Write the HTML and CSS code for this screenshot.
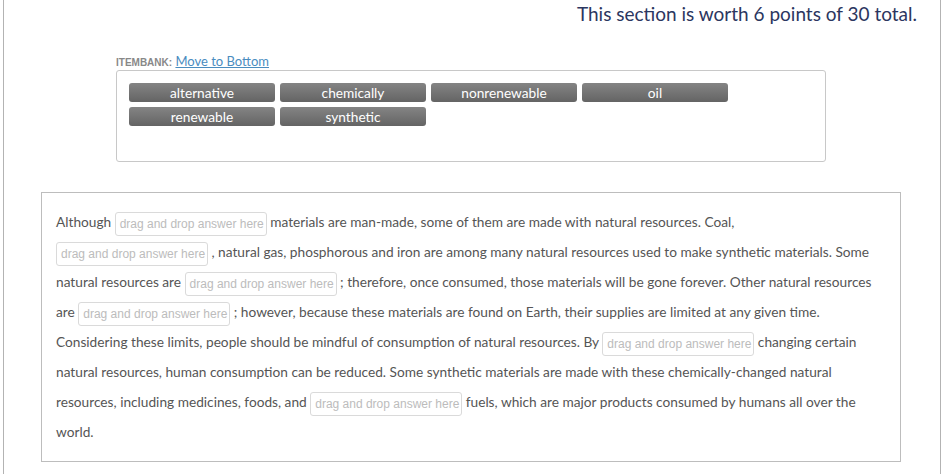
FILE: index.html
```html
<!DOCTYPE html>
<html>
<head>
<meta charset="utf-8">
<link rel="stylesheet" href="styles.css">
</head>
<body>
<div class="frame">
  <h1 class="worth">This section is worth 6 points of 30 total.</h1>
  <div class="itembank">
    <div class="ib-label"><span class="ib-title">ITEMBANK:</span> <a class="ib-link" href="#">Move to Bottom</a></div>
    <div class="ib-box">
      <span class="chip">alternative</span>
      <span class="chip">chemically</span>
      <span class="chip">nonrenewable</span>
      <span class="chip">oil</span>
      <span class="chip">renewable</span>
      <span class="chip">synthetic</span>
    </div>
  </div>
  <div class="passage">
    <p class="text">Although <span class="drop">drag and drop answer here</span> materials are man-made, some of them are made with natural resources. Coal, <span class="drop">drag and drop answer here</span> , natural gas, phosphorous and iron are among many natural resources used to make synthetic materials. Some natural resources are <span class="drop">drag and drop answer here</span> ; therefore, once consumed, those materials will be gone forever. Other natural resources are <span class="drop">drag and drop answer here</span> ; however, because these materials are found on Earth, their supplies are limited at any given time. Considering these limits, people should be mindful of consumption of natural resources. By <span class="drop">drag and drop answer here</span> changing certain natural resources, human consumption can be reduced. Some synthetic materials are made with these chemically-changed natural resources, including medicines, foods, and <span class="drop">drag and drop answer here</span> fuels, which are major products consumed by humans all over the world.</p>
  </div>
</div>
</body>
</html>
```
FILE: styles.css
```css
html, body {
  margin: 0;
  padding: 0;
  background: #fff;
}
body {
  font-family: "Lato", "Liberation Sans", sans-serif;
}
.frame {
  margin-left: 3px;
  width: 938px;
  box-sizing: border-box;
  min-height: 474px;
  border-left: 1px solid #b3b3b3;
  border-right: 1px solid #b3b3b3;
}
.worth {
  margin: 0;
  padding-right: 23px;
  text-align: right;
  font-family: "Lato", sans-serif;
  font-weight: 400;
  font-size: 19px;
  line-height: 27px;
  color: #2b3660;
}
.itembank {
  margin-left: 112px;
  width: 710px;
  margin-top: 27px;
}
.ib-label {
  line-height: 14px;
  height: 16px;
  font-size: 13px;
}
.ib-title {
  font-family: "Liberation Sans", Arial, sans-serif;
  font-weight: bold;
  font-size: 10px;
  color: #888;
}
.ib-link {
  font-family: "Lato", sans-serif;
  font-size: 13px;
  color: #4a8cbf;
  text-decoration: underline;
}
.ib-box {
  box-sizing: border-box;
  height: 92px;
  border: 1px solid #c8c8c8;
  border-radius: 3px;
  padding: 12px 12px;
  display: flex;
  flex-wrap: wrap;
  align-content: flex-start;
  gap: 5px 5px;
}
.chip {
  box-sizing: border-box;
  width: 146px;
  height: 19px;
  border-radius: 3px;
  background: linear-gradient(#848484, #646464);
  color: #fff;
  font-family: "Lato", sans-serif;
  font-size: 13.7px;
  line-height: 19px;
  text-align: center;
}
.passage {
  margin-left: 37px;
  margin-top: 30px;
  width: 860px;
  box-sizing: border-box;
  border: 1px solid #bdbdbd;
  padding: 14px 14px 14px 14px;
}
.text {
  margin: 0;
  font-family: "Lato", sans-serif;
  font-size: 13.7px;
  line-height: 30px;
  color: #555;
}
.drop {
  display: inline-block;
  box-sizing: border-box;
  width: 152px;
  height: 24px;
  line-height: 22px;
  border: 1px solid #dadada;
  border-radius: 3px;
  padding: 0 4px;
  font-family: "Liberation Sans", Arial, sans-serif;
  font-size: 12px;
  color: #bcbcbc;
  vertical-align: middle;
  white-space: nowrap;
  text-align: center;
}
```
